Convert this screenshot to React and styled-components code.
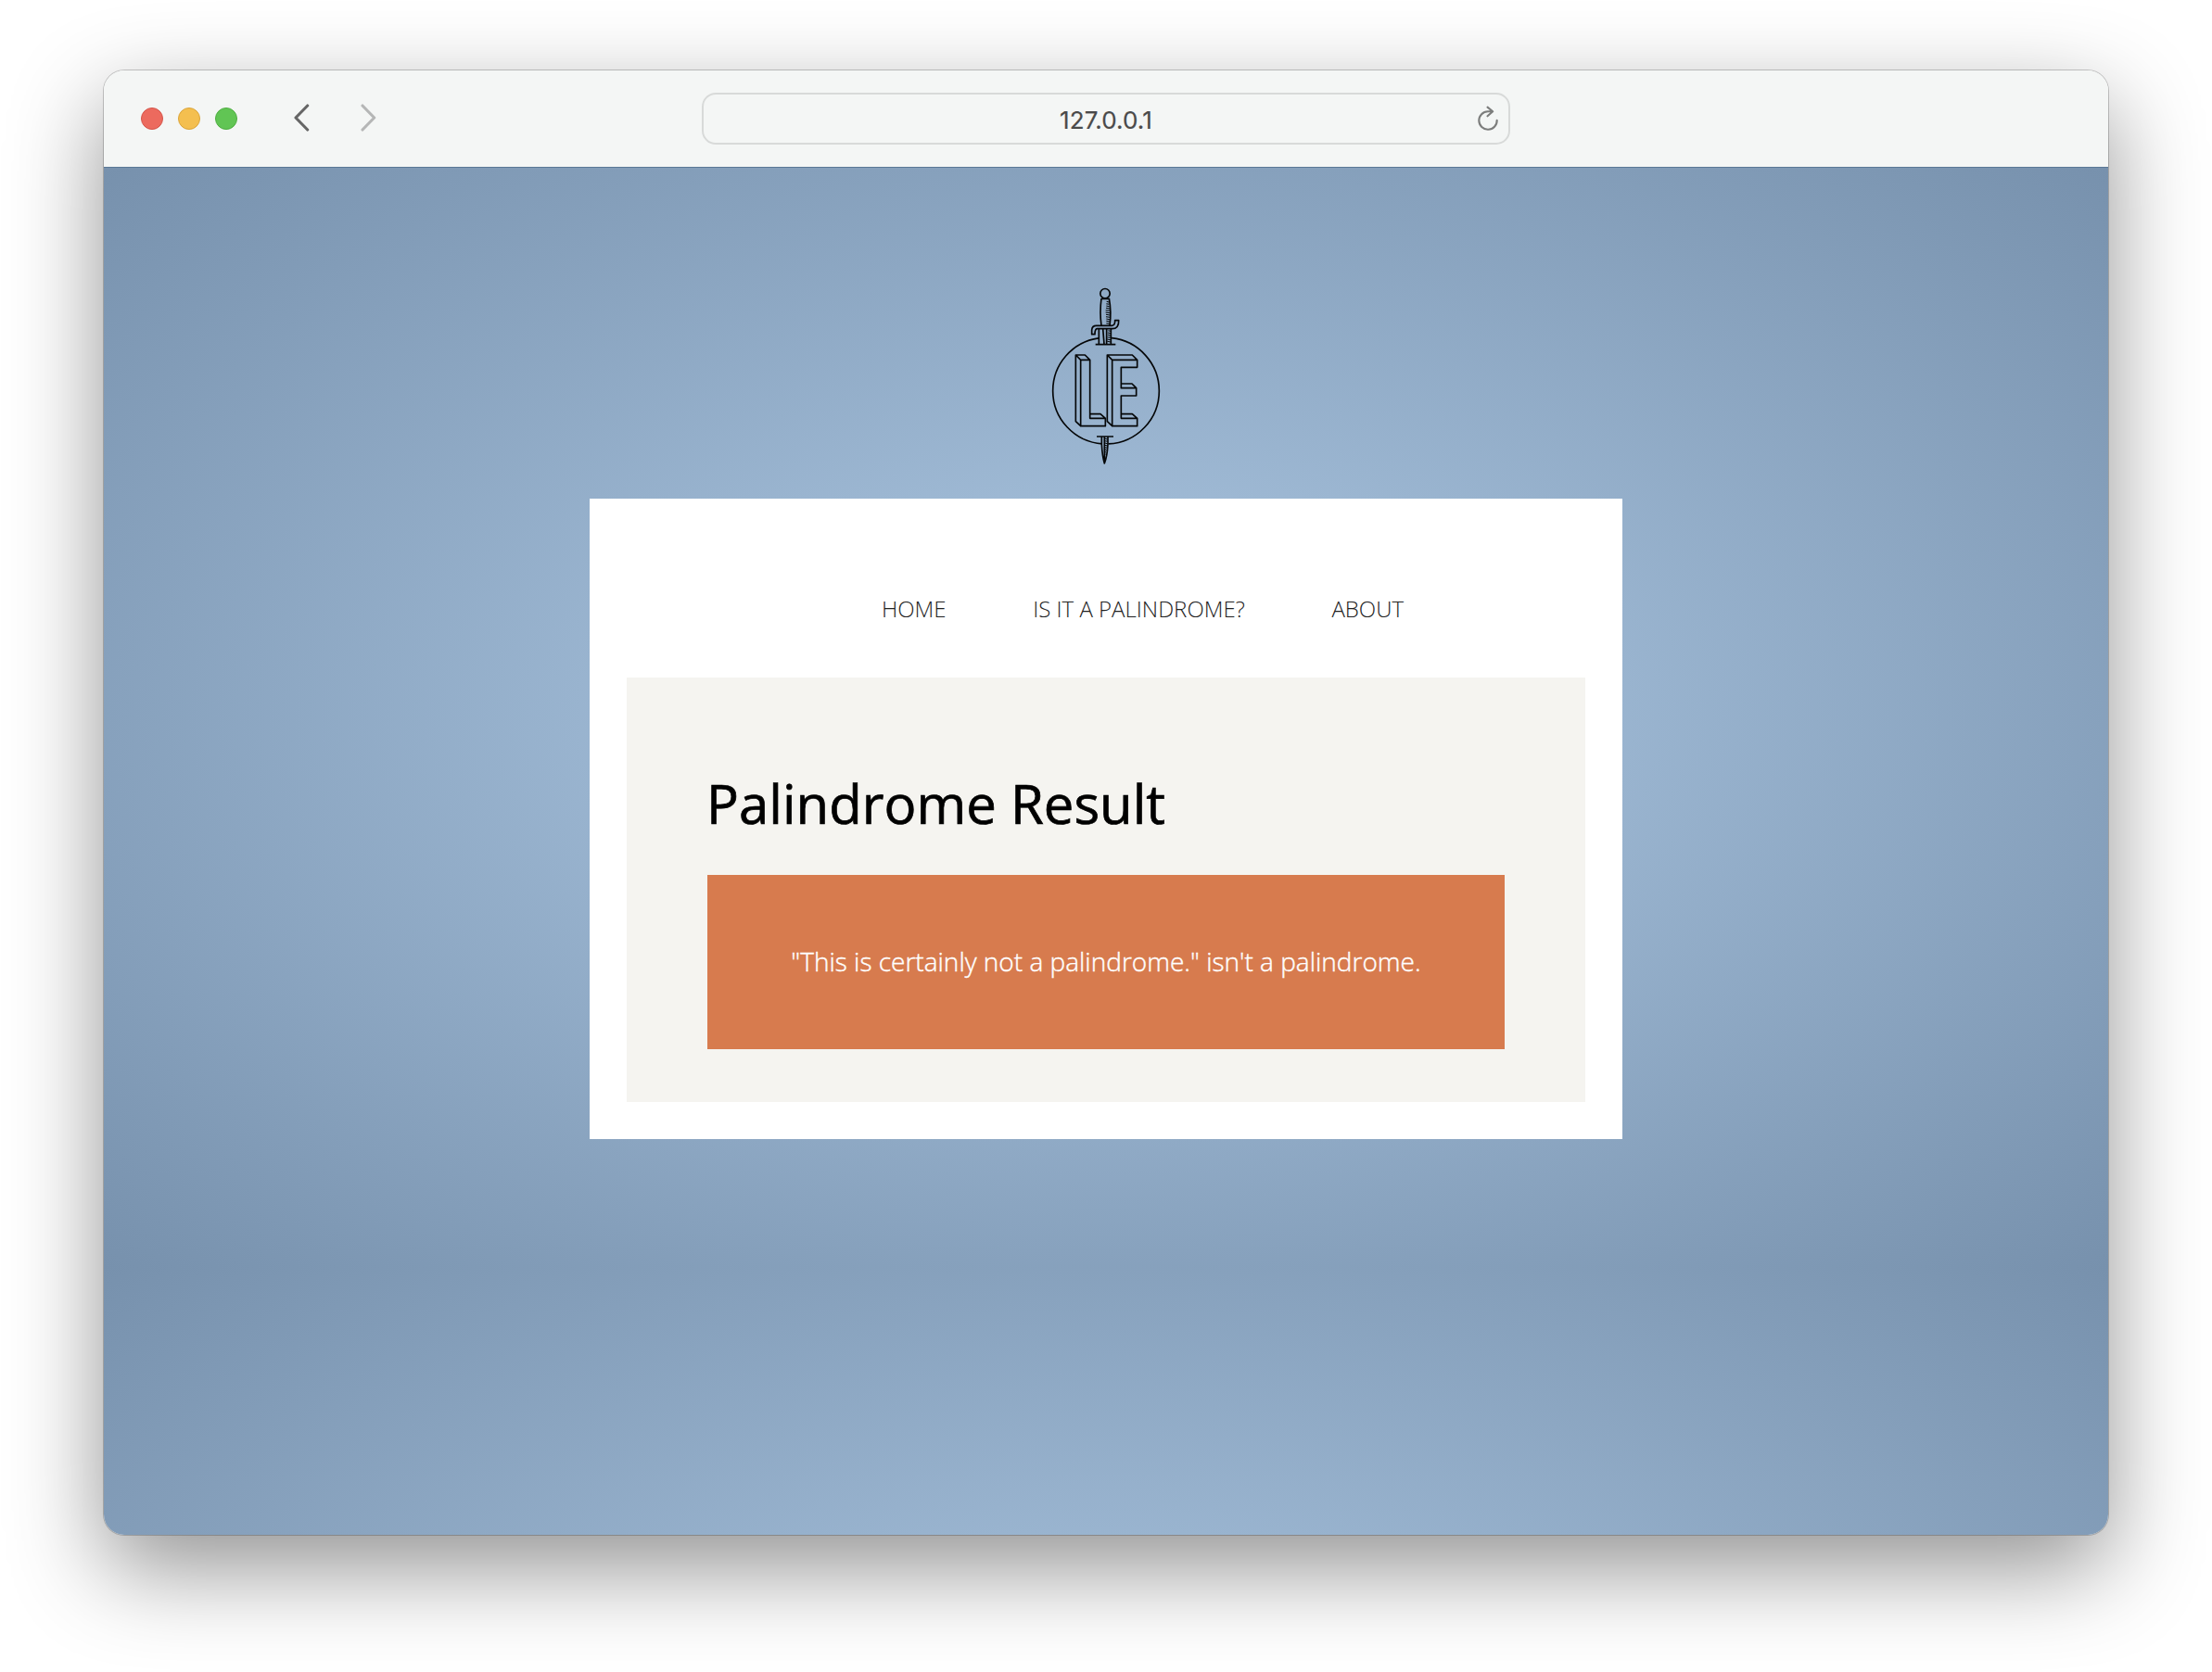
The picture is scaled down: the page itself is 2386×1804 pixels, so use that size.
import React from "react";
import styled, { createGlobalStyle } from "styled-components";

const GlobalStyle = createGlobalStyle`
  * { box-sizing: border-box; }
  body { margin: 0; background: #fff; }
`;

const Desktop = styled.div`
  width: 2386px;
  height: 1804px;
  padding: 76px 112px 148px;
  overflow: hidden;
  display: flex;
`;

const Window = styled.div`
  flex: 1;
  display: flex;
  flex-direction: column;
  border-radius: 22px;
  overflow: hidden;
  box-shadow: 0 0 0 1px rgba(0, 0, 0, 0.2), 0 36px 100px rgba(0, 0, 0, 0.43);
`;

const Toolbar = styled.header`
  height: 104px;
  flex: none;
  display: grid;
  grid-template-columns: 1fr 872px 1fr;
  align-items: center;
  background: #f4f6f5;
`;

const Controls = styled.div`
  display: flex;
  align-items: center;
  padding-left: 40px;
`;

const Lights = styled.div`
  display: flex;
  gap: 16px;
`;

const Light = styled.span`
  width: 24px;
  height: 24px;
  border-radius: 50%;
  background: ${(p) => p.$fill};
  border: 1px solid ${(p) => p.$edge};
`;

const Arrows = styled.div`
  display: flex;
  gap: 55px;
  margin: -2px 0 0 60px;
`;

const Arrow = styled.svg`
  display: block;
  width: 18px;
  height: 30px;
  fill: none;
  stroke: ${(p) => p.$tone};
  stroke-width: 3.1;
  stroke-linecap: round;
  stroke-linejoin: round;
`;

const AddressBar = styled.div`
  height: 56px;
  display: grid;
  grid-template-columns: 45px 1fr 45px;
  align-items: center;
  border: 2px solid #d8dad9;
  border-radius: 15px;
`;

const Address = styled.span`
  grid-column: 2;
  padding-top: 3px;
  text-align: center;
  font: 400 26px/30px Inter, Roboto, sans-serif;
  letter-spacing: 0.1px;
  color: #4a4a4a;
  -webkit-text-stroke: 0.2px #4a4a4a;
`;

const Reload = styled.svg`
  width: 24px;
  height: 28px;
  fill: none;
  stroke: #7c7d7c;
  stroke-width: 2.1;
  stroke-linecap: round;
  stroke-linejoin: round;
  justify-self: center;
`;

const Page = styled.main`
  flex: 1;
  display: flex;
  flex-direction: column;
  align-items: center;
  padding-top: 129px;
  border-top: 1px solid #5a7896;
  font-family: "Open Sans", "Noto Sans", sans-serif;
  background: radial-gradient(#adc8e3, #7791ad) 0 0 / 100% 1186px;
`;

const Emblem = styled.svg`
  width: 120px;
  height: 192px;
  flex: none;
  fill: none;
  stroke: #050708;
  stroke-width: 5;
  stroke-linejoin: round;
`;

const Card = styled.section`
  width: 1114px;
  height: 691px;
  margin-top: 36px;
  padding: 0 40px 40px;
  display: flex;
  flex-direction: column;
  background: #fff;
`;

const Nav = styled.nav`
  height: 193px;
  padding: 101px 0 0 275px;
  display: flex;
  gap: 93.6px;
`;

const NavLink = styled.a`
  font-size: 24px;
  line-height: 36px;
  font-weight: 300;
  white-space: nowrap;
  color: #222;
`;

const Panel = styled.div`
  flex: 1;
  padding: 94px 87px 57px;
  background: #f5f4f0;
`;

const Title = styled.h1`
  margin: 0 0 35px -1px;
  font-size: 58.1px;
  line-height: 84px;
  font-weight: 400;
  color: #000;
  -webkit-text-stroke: 0.7px #000;
`;

const Result = styled.p`
  margin: 0;
  height: 188px;
  padding-bottom: 2px;
  display: flex;
  align-items: center;
  justify-content: center;
  font-size: 28px;
  font-weight: 300;
  white-space: nowrap;
  color: #fff;
  -webkit-text-stroke: 0.4px #fff;
  background: #d77b4e;
`;

const LINKS = ["HOME", "IS IT A PALINDROME?", "ABOUT"];

function SwordEmblem() {
  return (
    <Emblem viewBox="39 30 360 576">
      {/* ring, open where the blade passes through */}
      <path d="M195 194.7A172 172 0 0 0 47 365A172 172 0 0 0 207 536.6M227 536.8A172 172 0 0 0 391 365A172 172 0 0 0 237 194" />
      {/* pommel and grip */}
      <circle cx="216" cy="50" r="15.5" />
      <path d="M204 66Q198 110 204 154M229 66Q237 110 231 154M204 67H230" />
      <path strokeWidth="3.2" d="M221 76l7 2M220 83l9 2M220 90l10 2M219 97l12 2M218 104l14 2M218 111l14 2M219 118l12 2M219 125l12 2M220 132l11 2M220 139l11 2M220 146l10 2" />
      {/* cross guard */}
      <path d="M173 182V168Q174 154 188 154H238Q249 153 248 137H260Q261 164 239 164H190Q183 165 183 182Z" />
      {/* blade above the ring */}
      <path d="M196 164V214M235 164V214M209 164L213 214M221 164V214M185 215H250" />
      <path strokeWidth="3.2" d="M226 170l8 2M225 177l9 2M225 184l9 2M224 191l10 2M223 198l11 2M223 205l11 2" />
      {/* letter L */}
      <path d="M137 265H167V454H217V479H137ZM137 265L121 249H151L167 265M121 249V464L137 479M167 440H201L217 454" />
      {/* letter E */}
      <path d="M239 265H320V289H268V356H317V381H268V454H320V479H239ZM239 265L223 249H304L320 265M223 249V464L239 479M268 342H303L317 356M268 440H304L320 454" />
      {/* blade tip */}
      <path d="M189 513H243M205 514V538Q207 578 214 600Q223 578 225 538V514M214 514V590" />
      <path strokeWidth="3.2" d="M216 520l8 2M216 527l8 2M216 534l8 2M215 541l8 2M215 548l7 2M215 555l6 2M214 562l5 2M214 569l4 2" />
    </Emblem>
  );
}

export default function App() {
  return (
    <>
      <GlobalStyle />
      <Desktop>
        <Window>
          <Toolbar>
            <Controls>
              <Lights>
                <Light $fill="#ec6a5e" $edge="#d5554a" />
                <Light $fill="#f4bf4f" $edge="#dba53a" />
                <Light $fill="#61c554" $edge="#4fae42" />
              </Lights>
              <Arrows>
                <Arrow viewBox="0 0 18 30" $tone="#666666">
                  <path d="M15.7 2L3 15L15.7 28" />
                </Arrow>
                <Arrow viewBox="0 0 18 30" $tone="#b5b6b6">
                  <path d="M2 2L14.7 15L2 28" />
                </Arrow>
              </Arrows>
            </Controls>
            <AddressBar>
              <Address>127.0.0.1</Address>
              <Reload viewBox="0 0 24 28">
                <path d="M21.7 15.7A9.7 9.7 0 1 1 12 6.3H17M11.5 1.6L17.2 6.3L11.5 11.3" />
              </Reload>
            </AddressBar>
          </Toolbar>
          <Page>
            <SwordEmblem />
            <Card>
              <Nav>
                {LINKS.map((label) => (
                  <NavLink key={label}>{label}</NavLink>
                ))}
              </Nav>
              <Panel>
                <Title>Palindrome Result</Title>
                <Result>"This is certainly not a palindrome." isn't a palindrome.</Result>
              </Panel>
            </Card>
          </Page>
        </Window>
      </Desktop>
    </>
  );
}
